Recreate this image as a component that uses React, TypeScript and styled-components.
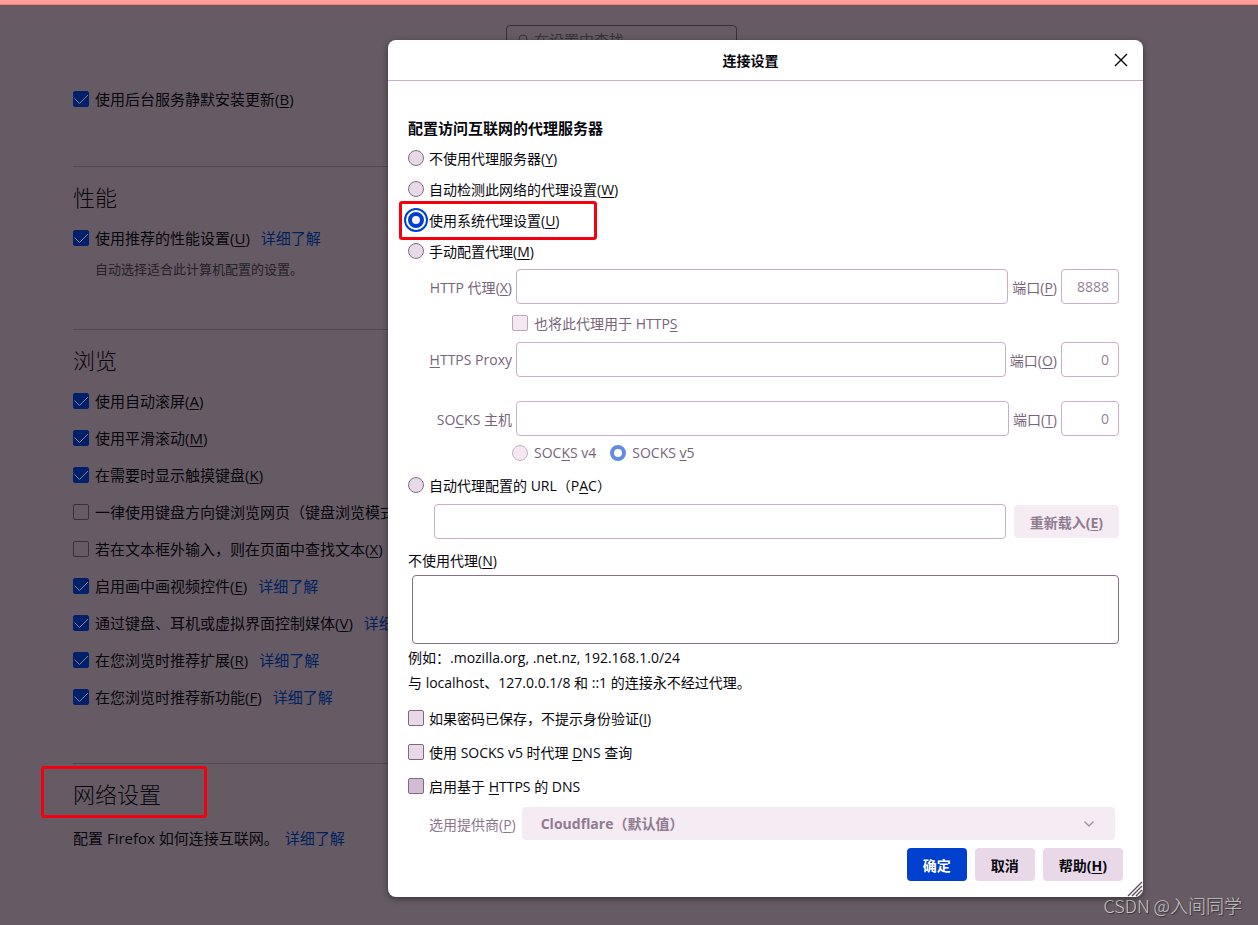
import React from "react";
import styled, {createGlobalStyle, css} from "styled-components";

const GlobalStyle = createGlobalStyle`
  *, *::before, *::after {
    box-sizing: border-box;
  }

  body {
    margin: 0;
    background-color: #665b64;
    color: #07060d;
    font-family: "Open Sans", "Noto Sans CJK SC", sans-serif;
    font-size: 15px;
  }

  h1, h2, p {
    margin: 0;
  }

  input, button, select, textarea {
    font: inherit;
    color: inherit;
  }

  u {
    text-underline-offset: 2px;
  }
`

/* page and dialog share the same grid cell */
const Stack = styled.div`
  display: grid;
  grid-template-columns: minmax(0, 1fr);
  min-height: 100vh;
`

const Page = styled.main`
  grid-area: 1 / 1;
  border-top: 4px solid #ff9d9d;
`

const PageContent = styled.div`
  border-top: 1px solid #f5816f;
  padding: 20px 0 0 73px;
`

const Column = styled.div`
  max-width: 664px;
`

const SearchBar = styled.div`
  display: flex;
  justify-content: flex-end;
  margin-bottom: 23px;
`

const SearchBox = styled.label`
  display: flex;
  align-items: center;
  gap: 5px;
  width: 231px;
  height: 30px;
  margin-bottom: 2px;
  padding: 0 10px;
  border: 1px solid #37323a;
  border-radius: 4px;
  color: #37323a;
`

const SearchInput = styled.input`
  flex: 1;
  min-width: 0;
  padding: 0;
  border: 0;
  outline: 0;
  background: transparent;

  &::placeholder {
    color: #37323a;
    opacity: 1;
  }
`

const Section = styled.section<{ $first?: boolean }>`
  margin-bottom: ${p => p.$first ? 49 : 48}px;
  ${p => !p.$first && css`
    padding-top: 15px;
    border-top: 1px solid #504952;
  `}
`

const SectionTitle = styled.h2`
  position: relative;
  margin-bottom: 7px;
  font-size: 22px;
  font-weight: 300;
  line-height: 30px;
`

const Row = styled.div`
  display: flex;
  align-items: center;
  gap: 11px;
  height: 37px;
  white-space: nowrap;
`

const Description = styled.p`
  padding: 2px 0 1px 22px;
  color: #242029;
  font-size: 13px;
  line-height: 22px;
`

const NetworkText = styled.p`
  line-height: 44px;
`

const Link = styled.a`
  color: #00205f;
  text-decoration: none;
`

const NetworkLink = styled(Link)`
  margin-left: 6px;
`

const Highlight = styled.span<{ $box: string }>`
  position: absolute;
  inset: ${p => p.$box};
  border: 3px solid #f4000f;
  border-radius: 3px;
  pointer-events: none;
`

const Option = styled.label<{ $gap?: number }>`
  display: inline-flex;
  align-items: center;
  gap: ${p => p.$gap ?? 6}px;
`

const Tick = styled.span`
  display: inline-grid;
  flex: none;

  > * {
    grid-area: 1 / 1;
  }

  svg {
    pointer-events: none;
  }
`

const PageCheck = styled.input`
  appearance: none;
  width: 16px;
  height: 16px;
  margin: 0;
  border: 1px solid #37323a;
  border-radius: 2px;

  &:checked {
    border-color: #00206a;
    background-color: #00206a;
  }
`

const DialogLayer = styled.div`
  grid-area: 1 / 1;
  align-self: start;
  padding: 40px 115px 28px 388px;
`

const Dialog = styled.div`
  position: relative;
  border-radius: 8px;
  background-color: #fff;
  box-shadow: 0 2px 6px rgba(0, 0, 0, .45);
  font-size: 14px;
`

const DialogHeader = styled.header`
  display: flex;
  align-items: center;
  height: 41px;
  padding-right: 14px;
  border-bottom: 1px solid #c9b0c9;
`

const DialogTitle = styled.h1`
  flex: 1;
  font-size: 14px;
  font-weight: 700;
  text-align: center;
`

const CloseButton = styled.button`
  display: flex;
  align-items: center;
  justify-content: center;
  width: 16px;
  height: 24px;
  padding: 0;
  border: 0;
  background: transparent;
`

const DialogBody = styled.form`
  padding: 36px 24px 0 20px;
`

const GroupTitle = styled.h2`
  margin-bottom: 2px;
  font-size: 15px;
  font-weight: 700;
  line-height: 23px;
`

const RadioRow = styled.div`
  display: flex;
  align-items: center;
  height: 31px;
`

const Marked = styled.div`
  position: relative;
`

const Radio = styled.input`
  appearance: none;
  flex: none;
  width: 16px;
  height: 16px;
  margin: 0;
  border: 1px solid #836f84;
  border-radius: 50%;
  background-color: #e8d9e8;

  &:checked {
    border: 4px solid #0040cf;
    background-color: #fbf3fb;
    outline: 2px solid #0040cf;
    outline-offset: 2px;
  }

  &:disabled {
    border-color: #c3b1c3;
    background-color: #f4e9f3;
  }

  &:disabled:checked {
    border-color: #628ce4;
    background-color: #fff;
    outline: 0;
  }
`

const Check = styled.input<{ $dark?: boolean }>`
  appearance: none;
  flex: none;
  width: 16px;
  height: 16px;
  margin: 0;
  border: 1px solid #7d6a7e;
  border-radius: 2px;
  background-color: ${p => p.$dark ? '#d2bcd3' : '#e8d9e8'};

  &:disabled {
    border-color: #bda6bd;
    background-color: #f4e9f3;
  }
`

const ProxyGrid = styled.div`
  padding-top: 3px;
  color: #76657a;
`

const ProxyRow = styled.div`
  display: grid;
  grid-template-columns: 104px minmax(0, 1fr) auto 58px;
  align-items: center;
  column-gap: 4px;
`

const ProxyLabel = styled.label`
  text-align: right;
  white-space: nowrap;
`

const Field = styled.input`
  width: 100%;
  min-width: 0;
  height: 35px;
  padding: 0 9px;
  border: 1px solid #c9b0c6;
  border-radius: 4px;
  background-color: #fff;
  color: #937f95;
`

const PortField = styled(Field)`
  text-align: right;
`

const ProxyOptions = styled.div<{ $height: number }>`
  display: flex;
  align-items: center;
  gap: 14px;
  height: ${p => p.$height}px;
  padding-left: 104px;
`

const SocksRow = styled(ProxyRow)`
  margin-top: 24px;
`

const PacRow = styled.div`
  display: flex;
  align-items: center;
  gap: 8px;
  padding: 4px 0 0 26px;
`

const Button = styled.button<{ $primary?: boolean }>`
  height: 33px;
  padding: 0 16px;
  border: 0;
  border-radius: 4px;
  background-color: ${p => p.$primary ? '#0040cf' : '#e9d9e8'};
  color: ${p => p.$primary ? '#fff' : '#07060d'};
  font-weight: 700;
  white-space: nowrap;

  &:disabled {
    background-color: #f5ebf3;
    color: #8f7b90;
  }
`

const ExceptionLabel = styled.label`
  display: block;
  margin-top: 10px;
  line-height: 24px;
`

const ExceptionBox = styled.div`
  padding: 2px 0 1px 4px;
`

const ExceptionArea = styled.textarea`
  display: block;
  width: 100%;
  height: 69px;
  padding: 8px;
  border: 1px solid #85708a;
  border-radius: 4px;
  background-color: #fff;
  resize: none;
`

const Note = styled.p`
  line-height: 25px;
`

const CheckList = styled.div`
  padding-top: 6px;
`

const CheckRow = styled.div`
  display: flex;
  align-items: center;
  height: 34px;
`

const ProviderRow = styled.div`
  display: flex;
  align-items: center;
  gap: 6px;
  padding: 4px 4px 0 21px;
  color: #8b778c;
  white-space: nowrap;
`

const SelectWrap = styled.span`
  display: grid;
  flex: 1;
  align-items: center;

  > * {
    grid-area: 1 / 1;
  }

  svg {
    justify-self: end;
    margin-right: 20px;
    pointer-events: none;
  }
`

const Select = styled.select`
  appearance: none;
  width: 100%;
  height: 33px;
  padding: 0 40px 0 19px;
  border: 0;
  border-radius: 4px;
  background-color: #f5ebf3;
  font-weight: 700;

  &:disabled {
    color: #8f7b90;
    opacity: 1;
  }
`

const DialogFooter = styled.footer`
  display: flex;
  justify-content: flex-end;
  gap: 8px;
  padding: 8px 20px 16px;
`

const Grip = styled.svg`
  position: absolute;
  right: 0;
  bottom: 0;
`

const Watermark = styled.div`
  grid-area: 1 / 1;
  align-self: end;
  justify-self: end;
  padding: 0 16px 8px 0;
  color: #c9c5c8;
  font-family: "Noto Sans CJK SC", sans-serif;
  font-size: 18px;
  font-weight: 300;
  line-height: 24px;
  text-shadow: 1px 1px 1px rgba(0, 0, 0, .5);
  pointer-events: none;
`

interface PageOption {
    text: string;
    accessKey: string;
    checked?: boolean;
    more?: boolean;
}

const browsing: PageOption[] = [
    {text: '使用自动滚屏', accessKey: 'A', checked: true},
    {text: '使用平滑滚动', accessKey: 'M', checked: true},
    {text: '在需要时显示触摸键盘', accessKey: 'K', checked: true},
    {text: '一律使用键盘方向键浏览网页（键盘浏览模式）', accessKey: 'C'},
    {text: '若在文本框外输入，则在页面中查找文本', accessKey: 'X'},
    {text: '启用画中画视频控件', accessKey: 'E', checked: true, more: true},
    {text: '通过键盘、耳机或虚拟界面控制媒体', accessKey: 'V', checked: true, more: true},
    {text: '在您浏览时推荐扩展', accessKey: 'R', checked: true, more: true},
    {text: '在您浏览时推荐新功能', accessKey: 'F', checked: true, more: true},
]

const Key: React.FC<{ k: string }> = ({k}) => <>(<u>{k}</u>)</>

const OptionRow: React.FC<PageOption> = ({text, accessKey, checked, more}) => (
    <Row>
        <Option>
            <Tick>
                <PageCheck type="checkbox" defaultChecked={checked}/>
                {checked && (
                    <svg width="16" height="16" viewBox="0 0 16 16" fill="none" stroke="#8a828c">
                        <path d="M1.5 7.5 L6.5 12.5 L15 4"/>
                    </svg>
                )}
            </Tick>
            <span>{text}<Key k={accessKey}/></span>
        </Option>
        {more && <Link href="#">详细了解</Link>}
    </Row>
)

const ProxyMode: React.FC<{ text: string, accessKey: string, checked?: boolean }> = ({text, accessKey, checked}) => (
    <RadioRow>
        <Option $gap={5}>
            <Radio type="radio" name="proxyType" defaultChecked={checked}/>
            <span>{text}<Key k={accessKey}/></span>
        </Option>
    </RadioRow>
)

const App: React.FC = () => {
    return (
        <Stack>
            <GlobalStyle/>
            <Page>
                <PageContent>
                    <Column>
                        <SearchBar>
                            <SearchBox>
                                <svg width="12" height="12" viewBox="0 0 12 12" fill="none" stroke="currentColor">
                                    <circle cx="6" cy="5" r="4"/>
                                    <path d="M3 8 L0.5 11"/>
                                </svg>
                                <SearchInput type="search" placeholder="在设置中查找" aria-label="在设置中查找"/>
                            </SearchBox>
                        </SearchBar>
                        <Section $first>
                            <OptionRow text="使用后台服务静默安装更新" accessKey="B" checked/>
                        </Section>
                        <Section>
                            <SectionTitle>性能</SectionTitle>
                            <OptionRow text="使用推荐的性能设置" accessKey="U" checked more/>
                            <Description>自动选择适合此计算机配置的设置。</Description>
                        </Section>
                        <Section>
                            <SectionTitle>浏览</SectionTitle>
                            {browsing.map(o => <OptionRow key={o.accessKey} {...o}/>)}
                        </Section>
                        <Section>
                            <SectionTitle>
                                网络设置
                                <Highlight $box="-13px auto -9px -32px" style={{width: 166}}/>
                            </SectionTitle>
                            <NetworkText>
                                配置 Firefox 如何连接互联网。
                                <NetworkLink href="#">详细了解</NetworkLink>
                            </NetworkText>
                        </Section>
                    </Column>
                </PageContent>
            </Page>
            <DialogLayer>
                <Dialog role="dialog" aria-labelledby="dialogTitle">
                    <DialogHeader>
                        <DialogTitle id="dialogTitle">连接设置</DialogTitle>
                        <CloseButton type="button" aria-label="关闭">
                            <svg width="14" height="14" viewBox="0 0 14 14" fill="none" stroke="#07060d"
                                 strokeWidth="1.4">
                                <path d="M1 1 L13 13 M13 1 L1 13"/>
                            </svg>
                        </CloseButton>
                    </DialogHeader>
                    <DialogBody>
                        <GroupTitle>配置访问互联网的代理服务器</GroupTitle>
                        <ProxyMode text="不使用代理服务器" accessKey="Y"/>
                        <ProxyMode text="自动检测此网络的代理设置" accessKey="W"/>
                        <Marked>
                            <ProxyMode text="使用系统代理设置" accessKey="U" checked/>
                            <Highlight $box="-3px auto -5px -9px" style={{width: 198}}/>
                        </Marked>
                        <ProxyMode text="手动配置代理" accessKey="M"/>

                        <ProxyGrid>
                            <ProxyRow>
                                <ProxyLabel htmlFor="http">HTTP 代理<Key k="X"/></ProxyLabel>
                                <Field id="http" disabled/>
                                <label htmlFor="httpPort">端口<Key k="P"/></label>
                                <PortField id="httpPort" defaultValue="8888" disabled/>
                            </ProxyRow>
                            <ProxyOptions $height={38}>
                                <Option>
                                    <Check type="checkbox" disabled/>
                                    <span>也将此代理用于 HTTP<u>S</u></span>
                                </Option>
                            </ProxyOptions>
                            <ProxyRow>
                                <ProxyLabel htmlFor="https"><u>H</u>TTPS Proxy</ProxyLabel>
                                <Field id="https" disabled/>
                                <label htmlFor="httpsPort">端口<Key k="O"/></label>
                                <PortField id="httpsPort" defaultValue="0" disabled/>
                            </ProxyRow>
                            <SocksRow>
                                <ProxyLabel htmlFor="socks">SO<u>C</u>KS 主机</ProxyLabel>
                                <Field id="socks" disabled/>
                                <label htmlFor="socksPort">端口<Key k="T"/></label>
                                <PortField id="socksPort" defaultValue="0" disabled/>
                            </SocksRow>
                            <ProxyOptions $height={33}>
                                <Option>
                                    <Radio type="radio" name="socksVersion" disabled/>
                                    <span>SOC<u>K</u>S v4</span>
                                </Option>
                                <Option>
                                    <Radio type="radio" name="socksVersion" defaultChecked disabled/>
                                    <span>SOCKS <u>v</u>5</span>
                                </Option>
                            </ProxyOptions>
                        </ProxyGrid>

                        <RadioRow>
                            <Option $gap={5}>
                                <Radio type="radio" name="proxyType"/>
                                <span>自动代理配置的 URL（P<u>A</u>C）</span>
                            </Option>
                        </RadioRow>
                        <PacRow>
                            <Field aria-label="自动代理配置的 URL" disabled/>
                            <Button type="button" disabled>重新载入<Key k="E"/></Button>
                        </PacRow>

                        <ExceptionLabel htmlFor="noProxy">不使用代理<Key k="N"/></ExceptionLabel>
                        <ExceptionBox>
                            <ExceptionArea id="noProxy"/>
                        </ExceptionBox>
                        <Note>例如：.mozilla.org, .net.nz, 192.168.1.0/24</Note>
                        <Note>与 localhost、127.0.0.1/8 和 ::1 的连接永不经过代理。</Note>

                        <CheckList>
                            <CheckRow>
                                <Option $gap={5}>
                                    <Check type="checkbox"/>
                                    <span>如果密码已保存，不提示身份验证<Key k="I"/></span>
                                </Option>
                            </CheckRow>
                            <CheckRow>
                                <Option $gap={5}>
                                    <Check type="checkbox"/>
                                    <span>使用 SOCKS v5 时代理 <u>D</u>NS 查询</span>
                                </Option>
                            </CheckRow>
                            <CheckRow>
                                <Option $gap={5}>
                                    <Check type="checkbox" $dark/>
                                    <span>启用基于 <u>H</u>TTPS 的 DNS</span>
                                </Option>
                            </CheckRow>
                        </CheckList>
                        <ProviderRow>
                            <label htmlFor="provider">选用提供商<Key k="P"/></label>
                            <SelectWrap>
                                <Select id="provider" disabled>
                                    <option>Cloudflare（默认值）</option>
                                </Select>
                                <svg width="12" height="8" viewBox="0 0 12 8" fill="none" stroke="#a48fa5"
                                     strokeWidth="1.3">
                                    <path d="M1.5 1.5 L6 6 L10.5 1.5"/>
                                </svg>
                            </SelectWrap>
                        </ProviderRow>
                    </DialogBody>
                    <DialogFooter>
                        <Button type="button" $primary>确定</Button>
                        <Button type="button">取消</Button>
                        <Button type="button">帮助<Key k="H"/></Button>
                    </DialogFooter>
                    <Grip width="16" height="16" viewBox="0 0 16 16" fill="none" stroke="#5a4e5a"
                          strokeWidth="1.4">
                        <path d="M1 15 L15 1 M5 15 L15 5 M9 15 L15 9 M13 15 L15 13"/>
                    </Grip>
                </Dialog>
            </DialogLayer>
            <Watermark>CSDN @入间同学</Watermark>
        </Stack>
    )
}

export default App;
